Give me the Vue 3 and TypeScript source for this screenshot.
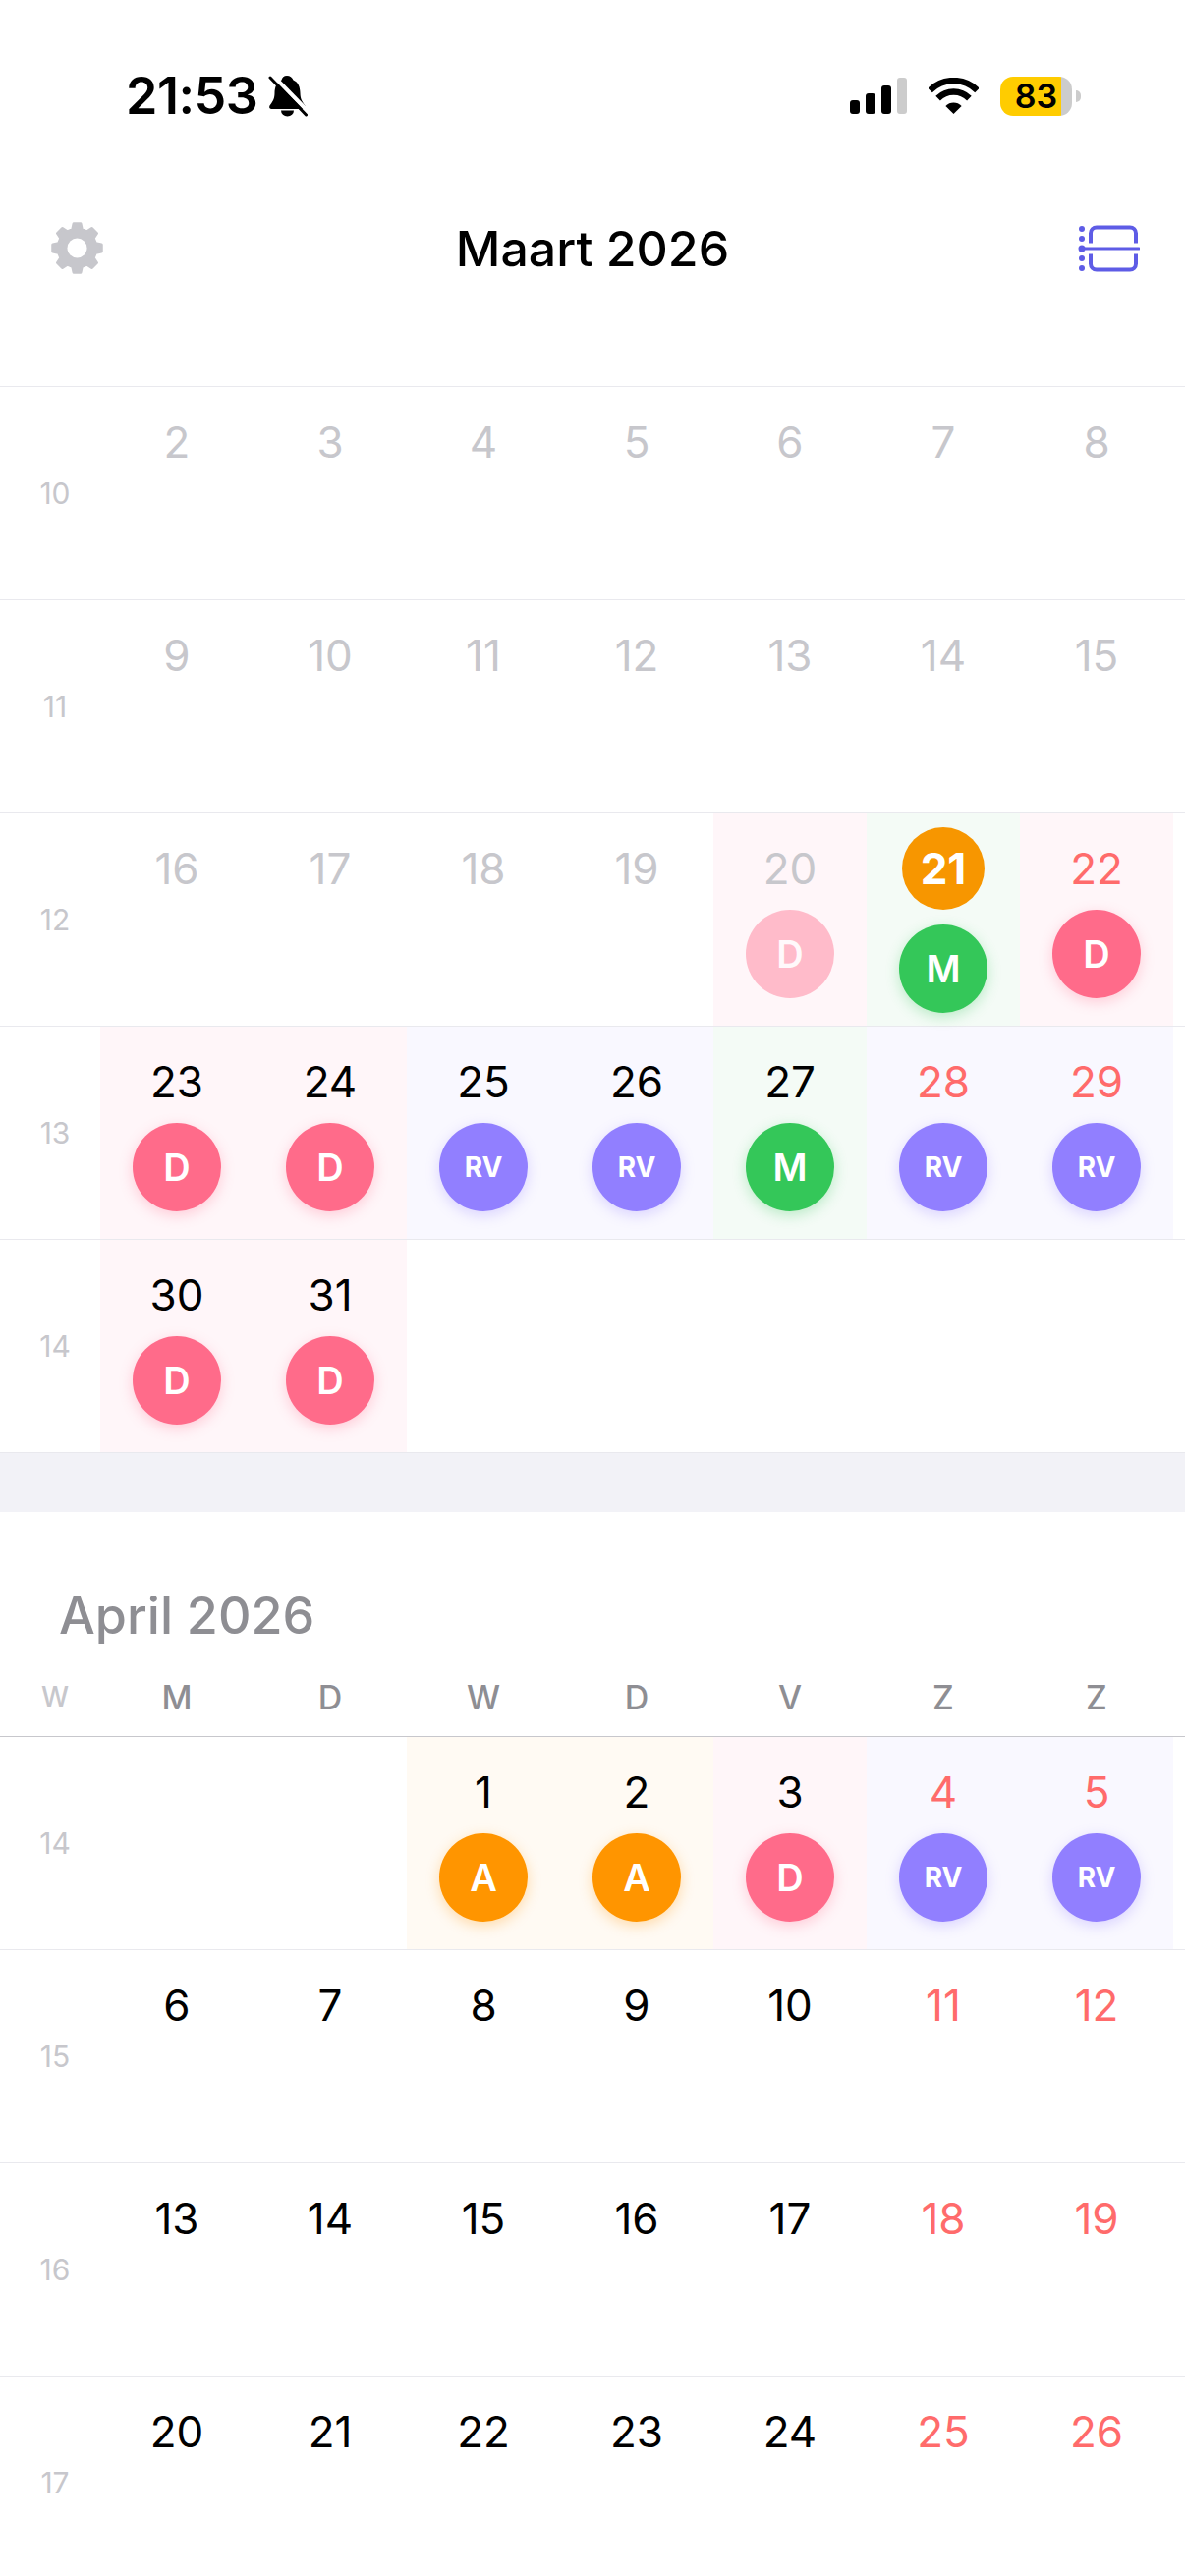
<template>
  <div class="screen">
    <div class="status-bar">
      <div class="status-left">
        <span class="clock">21:53</span>
        <svg class="bell" width="40" height="42" viewBox="0 0 40 42">
          <path d="M19 0c-3 0-5 2-5.500 4.500C8.500 6.500 6.500 12 6.500 18c0 6-2.500 9-5 12.500-1 2 0 3.500 2 3.500h32c2 0 3-1.500 2-3.500-2.500-3.500-5-6.500-5-12.500 0-6-2-11.500-7-13.500C24.500 2 22 0 19 0z" />
          <path d="M13 35.500a6.500 6 0 0 0 13 0z" />
          <path d="M5 0L41 37" stroke="#fff" stroke-width="4" fill="none" />
          <path d="M2 2L38.500 40" stroke="#000" stroke-width="3" stroke-linecap="round" fill="none" />
        </svg>
      </div>
      <div class="status-right">
        <svg width="58" height="37" viewBox="0 0 58 37">
          <rect x="0" y="23" width="10" height="14" rx="3" />
          <rect x="16" y="16" width="10" height="21" rx="3" />
          <rect x="32" y="8" width="10" height="29" rx="3" />
          <rect x="48" y="0" width="10" height="37" rx="3" fill="#cccccc" />
        </svg>
        <svg width="51" height="37" viewBox="0 0 51 37">
          <path d="M1.500 13A34 34 0 0 1 49.500 13" fill="none" stroke="#000" stroke-width="6.500" />
          <path d="M9.600 21.100A22.500 22.500 0 0 1 41.400 21.100" fill="none" stroke="#000" stroke-width="6.500" />
          <path d="M25.500 37L17.400 28.900A11.500 11.500 0 0 1 33.600 28.900z" />
        </svg>
        <div class="battery">
          <div class="battery-body">83</div>
          <div class="battery-cap"></div>
        </div>
      </div>
    </div>

    <header class="nav">
      <svg class="gear" width="53" height="53" viewBox="0 0 53 53">
        <polygon :points="gearPoints" fill="#c7c7cc" stroke="#c7c7cc" stroke-width="3" stroke-linejoin="round" />
        <circle cx="26.500" cy="26.500" r="10" fill="#fff" />
      </svg>
      <h1 class="nav-title">Maart 2026</h1>
      <svg class="layout-icon" width="63" height="50" viewBox="0 -1.500 63 50">
        <g fill="#5e5ce6">
          <circle cx="4" cy="3.500" r="3" />
          <circle cx="4" cy="13.500" r="3" />
          <circle cx="4" cy="23.500" r="3.500" />
          <circle cx="4" cy="33.500" r="3" />
          <circle cx="4" cy="43.500" r="3" />
        </g>
        <g fill="none" stroke="#5e5ce6">
          <path d="M4 23.500H62" stroke-width="3" stroke-linecap="round" />
          <path d="M13 18V8a6 6 0 0 1 6-6H53a6 6 0 0 1 6 6V18" stroke-width="4" />
          <path d="M13 29V39a6 6 0 0 0 6 6H53a6 6 0 0 0 6-6V29" stroke-width="4" />
        </g>
      </svg>
    </header>

    <section v-for="month in months" :key="month.name" class="month">
      <template v-if="month.title">
        <h2 class="month-title">{{ month.name }}</h2>
        <div class="week-head">
          <span class="week-head-label">W</span>
          <span v-for="(d, i) in weekdays" :key="i" class="weekday">{{ d }}</span>
        </div>
      </template>
      <div
        v-for="(row, r) in month.rows"
        :key="row.week"
        class="row"
        :class="{ 'under-head': month.title && r === 0 }"
      >
        <span class="week-no">{{ row.week }}</span>
        <div
          v-for="(cell, i) in row.cells"
          :key="i"
          class="cell"
          :class="cell.mark ? 'tone-' + cell.mark.toLowerCase() : ''"
        >
          <span
            v-if="cell.day"
            class="day"
            :class="{ muted: cell.muted, weekend: cell.weekend, today: cell.today }"
          >{{ cell.day }}</span>
          <span
            v-if="cell.mark"
            class="mark"
            :class="[
              'mark-' + cell.mark.toLowerCase(),
              { faded: cell.muted, 'after-today': cell.today }
            ]"
          >{{ cell.mark }}</span>
        </div>
      </div>
      <div v-if="!month.title" class="month-gap"></div>
    </section>
  </div>
</template>

<script setup lang="ts">
type Mark = 'D' | 'M' | 'RV' | 'A'

interface Cell {
  day?: number
  mark?: Mark
  muted?: boolean
  weekend?: boolean
  today?: boolean
}

const weekdays = ['M', 'D', 'W', 'D', 'V', 'Z', 'Z']

// first = date of the monday, count = days in the row that hold a date
function buildRow(week: number, first: number, marks: (Mark | null)[], opts: { mutedUntil?: number; start?: number; today?: number; last?: number } = {}) {
  const cells: Cell[] = []
  for (let i = 0; i < 7; i++) {
    const day = first + i
    const hidden = (opts.start !== undefined && i < opts.start) || (opts.last !== undefined && day > opts.last)
    if (hidden) {
      cells.push({})
      continue
    }
    const isToday = day === opts.today
    const muted = opts.mutedUntil !== undefined && day <= opts.mutedUntil
    cells.push({
      day,
      mark: marks[i] ?? undefined,
      muted,
      today: isToday,
      weekend: i >= 5 && !muted && !isToday
    })
  }
  return { week, cells }
}

const none: null[] = [null, null, null, null, null, null, null]

const months = [
  {
    name: 'Maart 2026',
    title: false,
    rows: [
      buildRow(10, 2, none, { mutedUntil: 20 }),
      buildRow(11, 9, none, { mutedUntil: 20 }),
      buildRow(12, 16, [null, null, null, null, 'D', 'M', 'D'], { mutedUntil: 20, today: 21 }),
      buildRow(13, 23, ['D', 'D', 'RV', 'RV', 'M', 'RV', 'RV']),
      buildRow(14, 30, ['D', 'D', null, null, null, null, null], { last: 31 })
    ]
  },
  {
    name: 'April 2026',
    title: true,
    rows: [
      buildRow(14, -1, [null, null, 'A', 'A', 'D', 'RV', 'RV'], { start: 2 }),
      buildRow(15, 6, none),
      buildRow(16, 13, none),
      buildRow(17, 20, none)
    ]
  }
]

// 8 teeth, one pointing straight up
const gearPoints = (() => {
  const pts: string[] = []
  const c = 26.5
  const add = (r: number, deg: number) => {
    const a = (deg * Math.PI) / 180
    pts.push(`${(c + r * Math.cos(a)).toFixed(2)},${(c + r * Math.sin(a)).toFixed(2)}`)
  }
  for (let t = 0; t < 8; t++) {
    const base = t * 45
    add(19.5, base - 14)
    add(25, base - 8)
    add(25, base + 8)
    add(19.5, base + 14)
  }
  return pts.join(' ')
})()
</script>

<style>
html,
body {
  margin: 0;
  background: #fff;
}
</style>

<style scoped>
.screen {
  width: 1206px;
  height: 2622px;
  overflow: hidden;
  background: #fff;
  font-family: Inter, "Liberation Sans", sans-serif;
  color: #000;
}

.status-bar {
  height: 195px;
  padding: 0 106px 0 128px;
  box-sizing: border-box;
  display: flex;
  align-items: center;
  justify-content: space-between;
}
.status-left {
  display: flex;
  align-items: center;
  gap: 11px;
}
.clock {
  font-size: 52px;
  font-weight: 600;
  line-height: 1;
  letter-spacing: -0.5px;
}
.status-right {
  display: flex;
  align-items: center;
  gap: 22px;
}
.battery {
  display: flex;
  align-items: center;
  gap: 4px;
}
.battery-body {
  width: 73px;
  height: 40px;
  border-radius: 13px;
  background: linear-gradient(90deg, #ffcc00 62px, #cccccc 62px);
  font-size: 34px;
  font-weight: 600;
  line-height: 40px;
  text-align: center;
}
.battery-cap {
  width: 5px;
  height: 12px;
  border-radius: 0 6px 6px 0;
  background: #cccccc;
}

.nav {
  height: 115px;
  padding: 0 46px;
  display: grid;
  grid-template-columns: 1fr auto 1fr;
  align-items: center;
  box-sizing: border-box;
  margin-bottom: 83px;
}
.gear {
  margin-left: 6px;
}
.nav-title {
  margin: 0;
  font-size: 50px;
  font-weight: 500;
  line-height: 1;
}
.layout-icon {
  justify-self: end;
}

.row {
  height: 217px;
  box-sizing: border-box;
  border-top: 1px solid #e9e9ee;
  display: grid;
  grid-template-columns: 102px repeat(7, 156px);
}
.row.under-head {
  border-top-color: #c7c7cc;
}
.week-no {
  align-self: center;
  padding-left: 10px;
  text-align: center;
  font-size: 30px;
  color: #c7c7cc;
  width: 92px;
}
.cell {
  display: flex;
  flex-direction: column;
  align-items: center;
  padding-top: 14px;
  box-sizing: border-box;
}
.tone-d { background: #fff6f9; }
.tone-m { background: #f4fbf6; }
.tone-rv { background: #f9f8ff; }
.tone-a { background: #fffaf3; }

.day {
  width: 84px;
  height: 84px;
  line-height: 84px;
  text-align: center;
  font-size: 44px;
  font-weight: 380;
  border-radius: 50%;
}
.day.muted { color: #c7c7cc; }
.day.weekend { color: #ff6b6b; }
.day.today {
  background: #f79600;
  color: #fff;
  font-weight: 700;
}

.mark {
  position: relative;
  width: 90px;
  height: 90px;
  border-radius: 50%;
  flex: none;
  display: flex;
  align-items: center;
  justify-content: center;
  color: #fff;
  font-size: 38px;
  font-weight: 600;
}
.mark.after-today { margin-top: 15px; }
.mark-d {
  background: #ff6b8a;
  box-shadow: 0 4px 14px rgba(255, 107, 138, 0.3);
}
.mark-m {
  background: #34c759;
  box-shadow: 0 4px 14px rgba(52, 199, 89, 0.3);
}
.mark-rv {
  background: #917fff;
  box-shadow: 0 4px 14px rgba(145, 127, 255, 0.3);
  font-size: 28px;
  font-weight: 700;
}
.mark-a {
  background: #ff9500;
  box-shadow: 0 4px 14px rgba(255, 149, 0, 0.3);
}
.mark.faded {
  opacity: 0.42;
  box-shadow: none;
}

.month-gap {
  height: 61px;
  box-sizing: border-box;
  border-top: 1px solid #e9e9ee;
  background: #f2f2f7;
}
.month-title {
  margin: 0;
  padding: 75px 0 11px 60px;
  font-size: 52px;
  line-height: 62px;
  font-weight: 550;
  color: #8e8e93;
}
.week-head {
  height: 80px;
  display: grid;
  grid-template-columns: 102px repeat(7, 156px);
  align-items: center;
  text-align: center;
}
.week-head-label {
  width: 92px;
  padding-left: 10px;
  font-size: 28px;
  font-weight: 500;
  color: #c7c7cc;
}
.weekday {
  font-size: 34px;
  font-weight: 500;
  color: #8e8e93;
}
</style>
